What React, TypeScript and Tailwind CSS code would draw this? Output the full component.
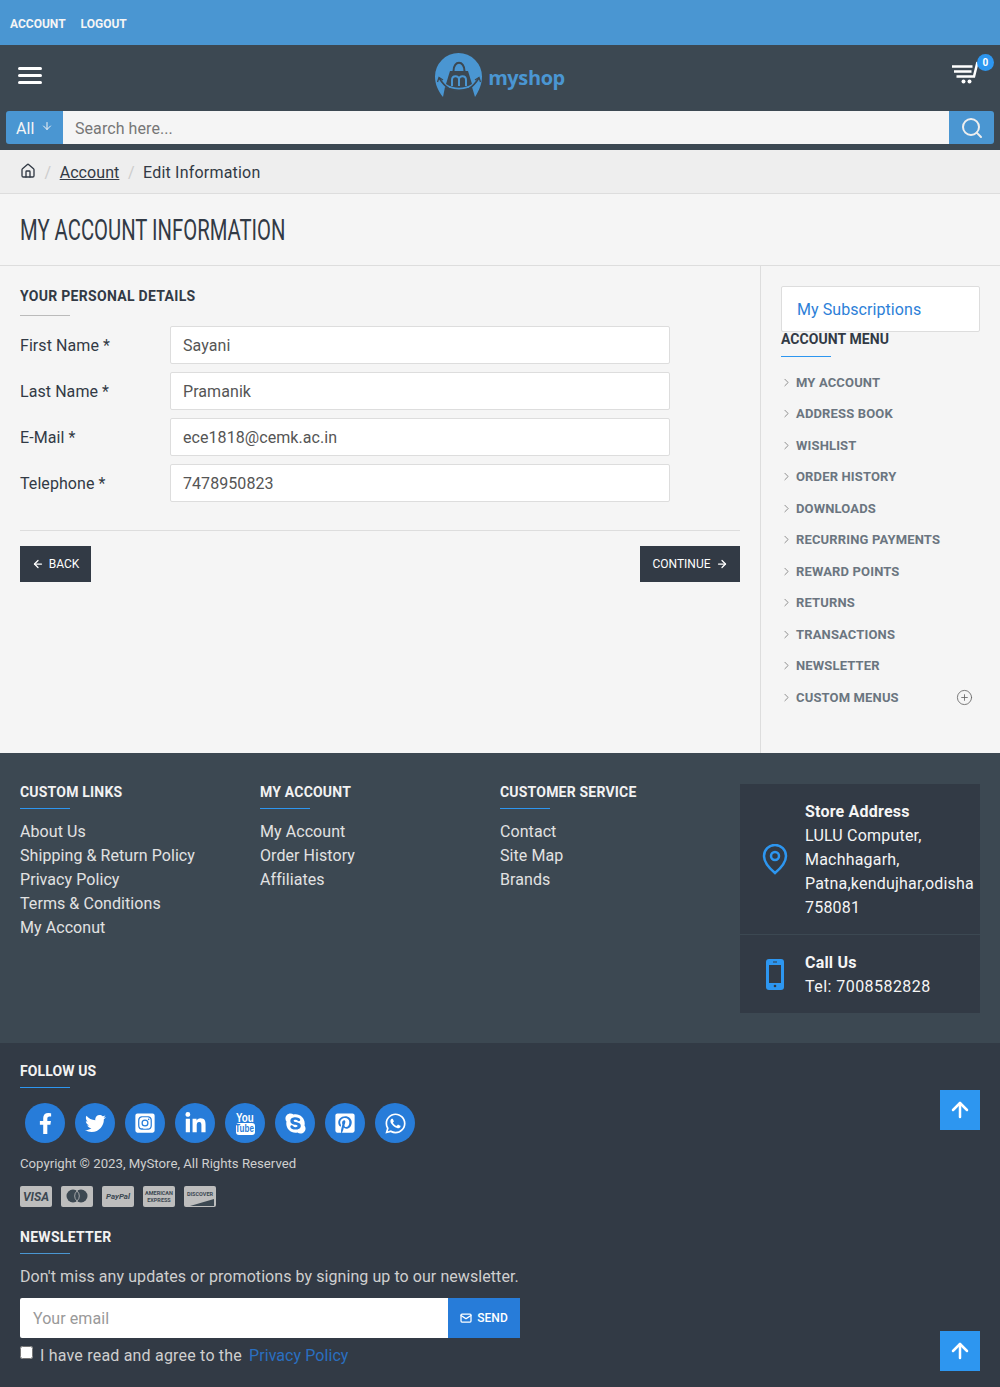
import { ArrowDown, ArrowLeft, ArrowRight, ChevronRight, CirclePlus, Mail, Search, ArrowUp, House } from "lucide-react";
import {
  FaFacebookF,
  FaTwitter,
  FaInstagramSquare,
  FaLinkedinIn,
  FaSkype,
  FaPinterestSquare,
  FaWhatsapp,
} from "react-icons/fa";

const fields = [
  { label: "First Name", value: "Sayani" },
  { label: "Last Name", value: "Pramanik" },
  { label: "E-Mail", value: "ece1818@cemk.ac.in" },
  { label: "Telephone", value: "7478950823" },
];

const accountMenu = [
  "My Account",
  "Address Book",
  "Wishlist",
  "Order History",
  "Downloads",
  "Recurring Payments",
  "Reward Points",
  "Returns",
  "Transactions",
  "Newsletter",
  "Custom Menus",
];

const footerCols = [
  {
    title: "Custom Links",
    links: ["About Us", "Shipping & Return Policy", "Privacy Policy", "Terms & Conditions", "My Acconut"],
  },
  { title: "My Account", links: ["My Account", "Order History", "Affiliates"] },
  { title: "Customer Service", links: ["Contact", "Site Map", "Brands"] },
];

// stacked "You / Tube" mark, the older youtube glyph
const YouTubeMark = () => (
  <div className="flex flex-col items-center font-['Liberation_Sans',sans-serif] font-bold tracking-normal">
    <span className="scale-x-[0.75] text-[13px] leading-[11px]">You</span>
    <span className="flex h-[12px] w-[19px] items-center justify-center rounded-[3px] bg-white text-[10px] leading-none text-[#277cd9]">
      <span className="scale-x-[0.8]">Tube</span>
    </span>
  </div>
);

const socials = [
  { Icon: FaFacebookF, size: "text-[21px]" },
  { Icon: FaTwitter, size: "text-[21px]" },
  { Icon: FaInstagramSquare, size: "text-[22px]" },
  { Icon: FaLinkedinIn, size: "text-[23px]" },
  { Icon: YouTubeMark, size: "" },
  { Icon: FaSkype, size: "text-[23px]" },
  { Icon: FaPinterestSquare, size: "text-[22px]" },
  { Icon: FaWhatsapp, size: "text-[23px]" },
];

const Logo = () => (
  <div className="flex items-center">
    <svg width="48" height="44" viewBox="0 0 48 44">
      <path
        d="M8 44C3 38 0 31 0 23.5a23.5 23.5 0 0 1 47 0C47 31 44 38 40 44L37 34Q24 41 10 34z"
        fill="#4a96d2"
      />
      <path d="M15 18h18l4 13c-8 5-18 5-26 0z" fill="#3c4852" />
      <path d="M18.5 18c0-11 11-11 11 0" fill="none" stroke="#3c4852" strokeWidth="2" />
      <path d="M4 25c4 6 7 9 10 10.5 7 2.5 13 2.5 20 0 3-1.5 6-4.5 10-10.5" fill="none" stroke="#3c4852" strokeWidth="1.6" />
      <path d="M2.5 29l1.5-4.500 4 2.500M45.500 29l-1.500-4.500-4 2.500" fill="none" stroke="#3c4852" strokeWidth="1.3" />
      <path d="M17 33v-6c0-5 7-5 7-.5 0-4.500 7-4.500 7 .5v6M24 26.500V33" fill="none" stroke="#4a96d2" strokeWidth="2" />
    </svg>
    <span className="ml-[5px] mt-[5px] font-['Open_Sans',sans-serif] text-[20px] font-bold leading-none tracking-[-0.4px] text-[#4a96d2]">
      myshop
    </span>
  </div>
);

const CartIcon = () => (
  <svg width="28" height="23" viewBox="0 0 28 23" fill="none" stroke="#fff" strokeWidth="2.5">
    <path d="M0 5.500h20.500M2 10.500h17.500M4.500 15.500h17.500L25.500 1" />
    <circle cx="11.500" cy="20.500" r="2" fill="#fff" stroke="none" />
    <circle cx="17.500" cy="20.500" r="2" fill="#fff" stroke="none" />
  </svg>
);

const Underline = ({ className = "bg-[#2d96f0]" }: { className?: string }) => (
  <div className={`h-px w-[50px] ${className}`} />
);

const PayCard = ({ children, className = "" }: { children: React.ReactNode; className?: string }) => (
  <div className={`flex h-[21px] w-[32px] items-center justify-center overflow-hidden rounded-[2px] bg-[#bdbdbd] tracking-normal text-[#3c4852] ${className}`}>
    {children}
  </div>
);

const ToTop = ({ className }: { className: string }) => (
  <button className={`absolute right-[20px] flex h-[40px] w-[40px] items-center justify-center bg-[#2d96f0] text-white ${className}`}>
    <ArrowUp size={24} strokeWidth={2.5} />
  </button>
);

export default function App() {
  return (
    <div className="relative h-[1387px] overflow-hidden bg-[#f5f5f5] font-['Roboto',sans-serif] text-[16px] tracking-[0.07px] text-[#323a45]">
      {/* Top bar */}
      <div className="flex h-[45px] items-center gap-[15px] bg-[#4a96d2] px-[10px] pt-[2px] text-[12px] font-bold uppercase tracking-normal text-[#f5f5f5]">
        <span>Account</span>
        <span>Logout</span>
      </div>

      {/* Header */}
      <div className="h-[105px] bg-[#3c4852] px-[6px] pt-[6px]">
        <div className="relative h-[60px]">
          <div className="absolute left-[12px] top-[16px] flex flex-col gap-[4px]">
            <div className="h-[3px] w-[24px] rounded-sm bg-white" />
            <div className="h-[3px] w-[24px] rounded-sm bg-white" />
            <div className="h-[3px] w-[24px] rounded-sm bg-white" />
          </div>
          <div className="flex justify-center pt-[2px]">
            <Logo />
          </div>
          <div className="absolute right-[14px] top-[10px]">
            <CartIcon />
          </div>
          <div className="absolute right-0 top-[3px] flex h-[17px] w-[17px] items-center justify-center rounded-full bg-[#2d96f0] text-[10px] font-bold text-white">
            0
          </div>
        </div>
        <div className="flex h-[33px]">
          <div className="flex w-[57px] items-center gap-[7px] rounded-l-[3px] bg-[#4a96d2] pl-[10px] pt-[2px] text-[#f5f5f5]">
            All
            <ArrowDown size={12} className="-mt-[6px]" />
          </div>
          <div className="flex flex-1 items-center bg-[#f5f5f5] px-[12px] pt-[2px] text-[#777]">Search here...</div>
          <div className="flex w-[45px] items-center justify-center rounded-r-[3px] bg-[#4a96d2] text-[#eee]">
            <Search size={24} strokeWidth={2} />
          </div>
        </div>
      </div>

      {/* Breadcrumb */}
      <div className="flex h-[44px] items-center border-b border-[#ddd] bg-[#eeeeee] pl-[20px] pt-[2px]">
        <House size={16} className="-mt-[3px]" />
        <span className="mx-[8.500px] text-[#ccc]">/</span>
        <span className="underline">Account</span>
        <span className="mx-[8.500px] text-[#ccc]">/</span>
        <span className="tracking-[0.2px]">Edit Information</span>
      </div>

      {/* Title */}
      <div className="flex h-[72px] items-center border-b border-[#ddd] pl-[20px] pt-[2px]">
        <h1 className="origin-left scale-x-[0.687] whitespace-nowrap text-[29.500px] uppercase leading-none tracking-normal">
          My Account Information
        </h1>
      </div>

      {/* Main */}
      <div className="flex h-[487px]">
        <div className="w-[761px] border-r border-[#ddd] px-[20px] pt-[22px]">
          <h2 className="text-[14px] font-bold uppercase leading-[17px] tracking-[0.3px]">Your Personal Details</h2>
          <div className="mt-[10px]">
            <Underline className="bg-[#bbb]" />
          </div>
          <div className="mt-[10px] flex flex-col gap-[8px]">
            {fields.map((f) => (
              <div key={f.label} className="flex items-center">
                <label className="w-[150px] pt-[2px]">
                  {f.label} <span>*</span>
                </label>
                <div className="flex h-[38px] w-[500px] items-center rounded-[2px] border border-[#ddd] bg-white px-[12px] pt-[2px] text-[#555]">
                  {f.value}
                </div>
              </div>
            ))}
          </div>
          <div className="mt-[28px] flex justify-between border-t border-[#ddd] pt-[15px]">
            <button className="flex h-[36px] w-[71px] items-center justify-center gap-[5px] bg-[#323a45] text-[12px] uppercase tracking-normal text-white">
              <ArrowLeft size={12} strokeWidth={2.5} />
              Back
            </button>
            <button className="flex h-[36px] w-[100px] items-center justify-center gap-[5px] bg-[#323a45] text-[12px] uppercase tracking-normal text-white">
              Continue
              <ArrowRight size={12} strokeWidth={2.5} />
            </button>
          </div>
        </div>
        <div className="w-[239px] px-[20px] pt-[20px]">
          <div className="flex h-[46px] items-center rounded-[2px] border border-[#ddd] bg-white pl-[15px] pt-[2px] text-[#2d7fd8]">
            My Subscriptions
          </div>
          <h3 className="text-[14px] font-bold uppercase leading-[14px]">Account Menu</h3>
          <div className="mt-[10px]">
            <Underline />
          </div>
          <ul className="mt-[9.500px]">
            {accountMenu.map((item) => (
              <li key={item} className="flex h-[31.500px] items-center text-[13px] font-bold uppercase tracking-[0.15px] text-[#6b7580]">
                <ChevronRight size={13} strokeWidth={1.5} className="-ml-[1px] mr-[3px] shrink-0 text-[#777]" />
                <span className="flex-1">{item}</span>
                {item === "Custom Menus" && <CirclePlus size={17} strokeWidth={1.2} className="mr-[7px] mt-[1px] text-[#666]" />}
              </li>
            ))}
          </ul>
        </div>
      </div>

      {/* Footer links */}
      <div className="flex h-[290px] bg-[#3c4852] pl-[20px] pt-[31px] text-[#e2e2e2]">
        {footerCols.map((col) => (
          <div key={col.title} className="w-[240px]">
            <h4 className="text-[14px] font-bold uppercase leading-[17px] tracking-[0.2px] text-[#f2f2f2]">{col.title}</h4>
            <div className="mt-[7px]">
              <Underline />
            </div>
            <ul className="mt-[11px]">
              {col.links.map((link) => (
                <li key={link} className="leading-[24px]">
                  {link}
                </li>
              ))}
            </ul>
          </div>
        ))}
        <div className="h-[229px] w-[240px] bg-[#323a45] tracking-[0.2px] text-[#f5f5f5]">
          <div className="flex h-[151px] items-center border-b border-[#3c4852]">
            <svg width="26" height="31" viewBox="0 0 26 31" fill="none" stroke="#2d96f0" strokeWidth="2.5" className="ml-[22px] mr-[17px] shrink-0">
              <path d="M13 29C7 24 2 18 2 12a11 11 0 0 1 22 0c0 6-5 12-11 17z" />
              <circle cx="13" cy="12" r="4" />
            </svg>
            <div className="pt-[2px] leading-[24px]">
              <div className="font-bold">Store Address</div>
              <div>LULU Computer,</div>
              <div>Machhagarh,</div>
              <div>Patna,kendujhar,odisha</div>
              <div>758081</div>
            </div>
          </div>
          <div className="flex h-[78px] items-center">
            <svg width="18" height="31" viewBox="0 0 18 31" className="ml-[26px] mr-[21px] shrink-0">
              <rect width="18" height="31" rx="3" fill="#2d96f0" />
              <rect x="3" y="6" width="12" height="18" fill="#323a45" />
              <rect x="7" y="2.5" width="4" height="1" fill="#323a45" />
              <circle cx="9" cy="27" r="1.3" fill="#323a45" />
            </svg>
            <div className="pt-[2px] leading-[24px]">
              <div className="font-bold">Call Us</div>
              <div className="tracking-[0.45px]">Tel: 7008582828</div>
            </div>
          </div>
        </div>
      </div>

      {/* Bottom footer */}
      <div className="h-[344px] bg-[#323a45] px-[20px] pt-[20px] text-[#cfcfcf]">
        <h4 className="text-[14px] font-bold uppercase leading-[17px] tracking-[0.1px] text-[#f2f2f2]">Follow Us</h4>
        <div className="mt-[7px]">
          <Underline />
        </div>
        <div className="mt-[15px] flex gap-[10px] pl-[5px]">
          {socials.map(({ Icon, size }, i) => (
            <div key={i} className={`flex h-[40px] w-[40px] items-center justify-center rounded-full bg-[#277cd9] text-white ${size}`}>
              <Icon />
            </div>
          ))}
        </div>
        <div className="mt-[12px] text-[13.200px] leading-[18px] tracking-normal">Copyright © 2023, MyStore, All Rights Reserved</div>
        <div className="mt-[13px] flex gap-[9px]">
          <PayCard>
            <span className="text-[12px] font-bold italic">VISA</span>
          </PayCard>
          <PayCard className="flex-col">
            <svg width="24" height="16" viewBox="0 0 24 16" fill="#3c4852">
              <circle cx="8" cy="7" r="6.500" />
              <circle cx="16" cy="7" r="6.500" />
              <path d="M12 2a6.500 6.500 0 0 1 0 10a6.500 6.500 0 0 1 0-10z" fill="none" stroke="#bdbdbd" strokeWidth="0.8" />
            </svg>
          </PayCard>
          <PayCard>
            <span className="text-[8px] font-bold italic">PayPal</span>
          </PayCard>
          <PayCard className="flex-col text-center">
            <span className="text-[5.500px] font-bold uppercase leading-[7px]">American</span>
            <span className="text-[5.500px] font-bold uppercase leading-[7px]">Express</span>
          </PayCard>
          <PayCard className="relative">
            <span className="-mt-[5px] text-[5.500px] font-bold uppercase">Discover</span>
            <svg width="32" height="21" viewBox="0 0 32 21" className="absolute inset-0">
              <path d="M6 20L30 13v7z" fill="#3c4852" />
            </svg>
          </PayCard>
        </div>
        <h4 className="mt-[22px] text-[14px] font-bold uppercase leading-[17px] tracking-[0.3px] text-[#f2f2f2]">Newsletter</h4>
        <div className="mt-[7px]">
          <Underline className="w-[48px] bg-[#4a96d2]" />
        </div>
        <p className="mt-[11px] leading-[24px]">Don't miss any updates or promotions by signing up to our newsletter.</p>
        <div className="mt-[9px] flex h-[40px] w-[500px]">
          <div className="flex flex-1 items-center rounded-l-[2px] bg-white pl-[13px] pt-[2px] text-[#999]">Your email</div>
          <button className="flex w-[72px] items-center justify-center gap-[5px] bg-[#277cd9] text-[12px] font-medium uppercase text-white">
            <Mail size={12} strokeWidth={2.5} />
            Send
          </button>
        </div>
        <div className="mt-[6px] flex items-start">
          <input type="checkbox" className="mr-[7px] mt-[2px] h-[13px] w-[13px]" />
          <span className="leading-[24px] tracking-[0.2px]">I have read and agree to the</span>
          <span className="ml-[7px] leading-[24px] text-[#2a6fc0]">Privacy Policy</span>
        </div>
      </div>

      <ToTop className="top-[1090px]" />
      <ToTop className="top-[1331px]" />
    </div>
  );
}
